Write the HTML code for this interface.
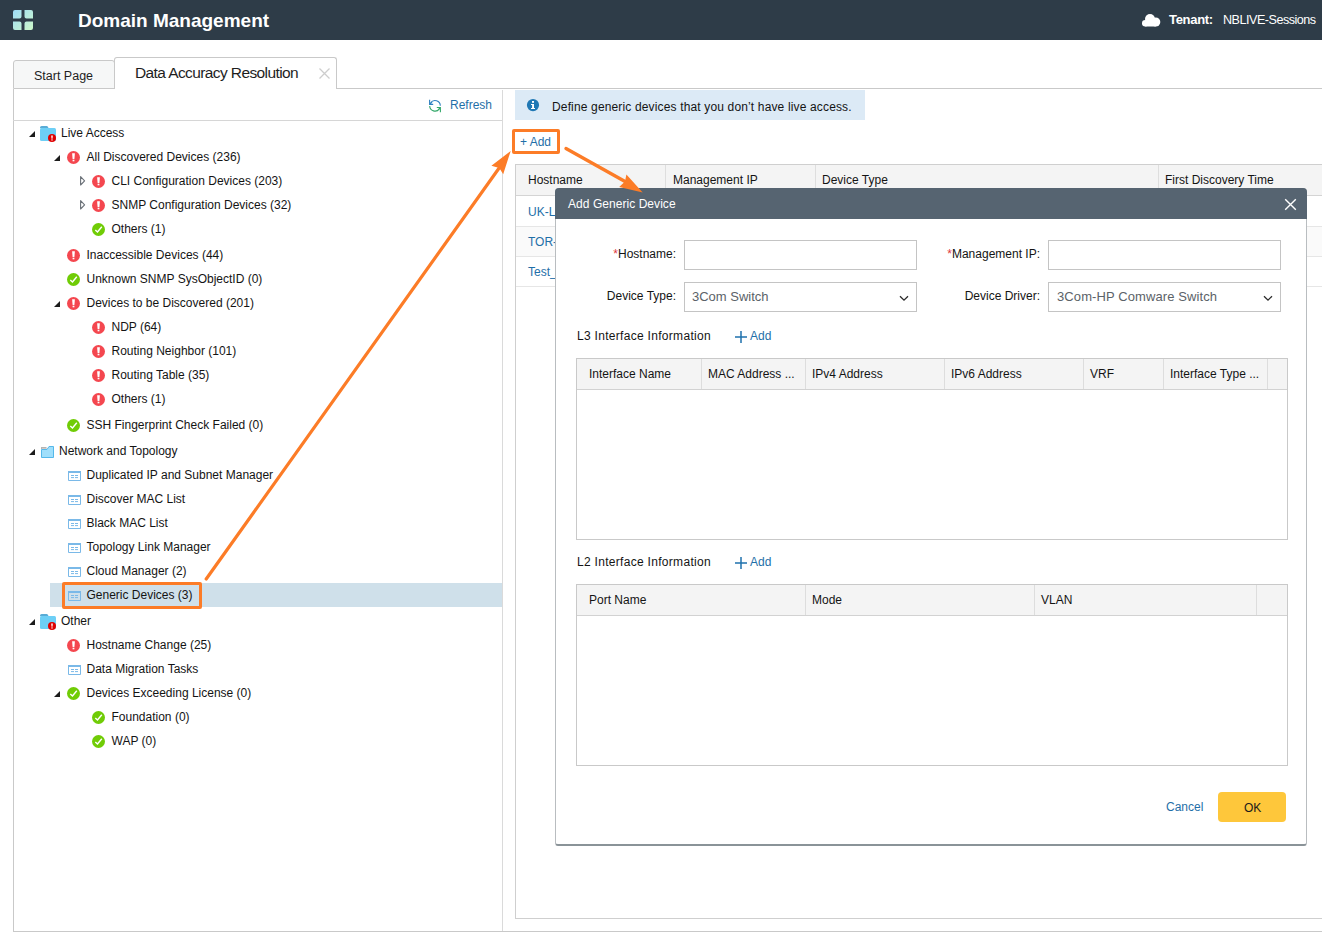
<!DOCTYPE html>
<html><head><meta charset="utf-8"><title>Domain Management</title>
<style>
*{margin:0;padding:0;box-sizing:border-box}
html,body{width:1322px;height:933px;overflow:hidden;background:#fff;font-family:"Liberation Sans",sans-serif;font-size:12px;color:#141414}
.a{position:absolute;white-space:nowrap}
.t{position:absolute;white-space:nowrap;line-height:16px;height:16px}
.lnk{color:#1f6fa8}
.tri{position:absolute;width:0;height:0;border-style:solid;border-width:0 0 6px 6px;border-color:transparent transparent #222 transparent}
.trio{position:absolute}
.ic{position:absolute;width:13px;height:13px}
.hline{position:absolute;height:1px}
.vline{position:absolute;width:1px}
</style></head><body>

<!-- header -->
<div class="a" style="left:0;top:0;width:1322px;height:40px;background:#2e3c48"></div>
<svg class="a" style="left:12px;top:9px" width="23" height="23" viewBox="0 0 23 23">
<defs><linearGradient id="gg" x1="0" y1="0" x2="1" y2="1"><stop offset="0" stop-color="#9fdcf7"/><stop offset="1" stop-color="#cdf8c8"/></linearGradient></defs>
<path fill="url(#gg)" d="M1 3a2 2 0 0 1 2-2h6.5v6.5a2 2 0 0 1-2 2H1z M12.5 1H19a2 2 0 0 1 2 2v6.5h-6.5a2 2 0 0 1-2-2z M1 12.5h6.5a2 2 0 0 1 2 2V21H3a2 2 0 0 1-2-2z M14.5 12.5H21V19a2 2 0 0 1-2 2h-6.5v-6.5a2 2 0 0 1 2-2z"/>
</svg>
<div class="a" style="left:78px;top:9px;font-size:19px;font-weight:bold;color:#fff;line-height:24px">Domain Management</div>
<svg class="a" style="left:1142px;top:14px" width="19" height="13" viewBox="0 0 19 13">
<circle cx="3.2" cy="9.3" r="3.2" fill="#fff"/><circle cx="8" cy="5" r="5" fill="#fff"/><circle cx="13.8" cy="8" r="4.5" fill="#fff"/><rect x="3.2" y="8" width="10.6" height="4.5" fill="#fff"/>
</svg>
<div class="a" style="left:1169px;top:12px;font-size:13px;font-weight:bold;color:#fff;line-height:16px;letter-spacing:-0.3px">Tenant:</div>
<div class="a" style="left:1223px;top:12px;font-size:12.6px;color:#fff;line-height:16px;letter-spacing:-0.5px">NBLIVE-Sessions</div>

<!-- tabs -->
<div class="a" style="left:13px;top:60px;width:102px;height:29px;background:#f6f7f7;border:1px solid #c9c9c9;border-radius:3px 3px 0 0"></div>
<div class="a" style="left:34px;top:68px;font-size:12.5px;line-height:16px;color:#1e1e1e">Start Page</div>
<div class="hline" style="left:336px;top:88px;width:986px;background:#c9c9c9"></div>
<div class="a" style="left:114px;top:57px;width:223px;height:32px;background:#fff;border:1px solid #c9c9c9;border-bottom:none;border-radius:3px 3px 0 0"></div>
<div class="a" style="left:135px;top:63px;font-size:15.5px;line-height:20px;letter-spacing:-0.6px;color:#1e1e1e">Data Accuracy Resolution</div>
<svg class="a" style="left:318px;top:67px" width="13" height="13" viewBox="0 0 13 13"><path d="M1.5 1.5l10 10M11.5 1.5l-10 10" stroke="#cdcdcd" stroke-width="1.3"/></svg>

<!-- left panel borders -->
<div class="vline" style="left:13px;top:89px;height:843px;background:#c9c9c9"></div>
<div class="vline" style="left:502px;top:90px;height:842px;background:#dadada"></div>
<div class="hline" style="left:13px;top:931px;width:1309px;background:#c9c9c9"></div>
<div class="hline" style="left:13px;top:120px;width:489px;background:#d6d6d6"></div>

<!-- refresh -->
<svg class="a" style="left:428px;top:99px" width="14" height="14" viewBox="0 0 14 14">
<path d="M2.66 3.76A5.3 5.3 0 0 1 12.3 6.8" fill="none" stroke="#2f80c0" stroke-width="1.1"/>
<path d="M1.6 0.8v4.6h3.6M1.8 5.2l2.2-2.2" fill="none" stroke="#2f80c0" stroke-width="1.1"/>
<path d="M1.7 7A5.3 5.3 0 0 0 11.34 9.84" fill="none" stroke="#34a86a" stroke-width="1.1"/>
<path d="M12.4 13.2V8.5H8.8M12.2 8.7l-1.6 1.8" fill="none" stroke="#34a86a" stroke-width="1.1"/>
</svg>
<div class="t lnk" style="left:450px;top:97px">Refresh</div>

<!-- TREE -->
<div class="a" style="left:50px;top:583px;width:452px;height:24px;background:#cfe0ea"></div>
<svg class="a" style="left:29px;top:131px" width="6" height="6" viewBox="0 0 6 6"><path d="M0 6L6 0V6z" fill="#1c1c1c"/></svg>
<svg class="a" style="left:40px;top:126px" width="18" height="16" viewBox="0 0 18 16"><path d="M0 1.6A1.6 1.6 0 0 1 1.6 0h5a1.5 1.5 0 0 1 1.3 0.8L8.6 2.2H0z" fill="#59acd6"/><rect x="0" y="1.9" width="16" height="13" rx="1.5" fill="#6dcff6"/><circle cx="12" cy="12" r="4" fill="#e00000"/><path d="M11.2 9.4h1.6l-0.3 3.4h-1z" fill="#fff"/><rect x="11.3" y="13.4" width="1.4" height="1.1" fill="#fff"/></svg>
<div class="t" style="left:61px;top:125px">Live Access</div>
<svg class="a" style="left:54px;top:155px" width="6" height="6" viewBox="0 0 6 6"><path d="M0 6L6 0V6z" fill="#1c1c1c"/></svg>
<svg class="a" style="left:67px;top:151px" width="13" height="13" viewBox="0 0 13 13"><circle cx="6.5" cy="6.5" r="6.5" fill="#f4474f"/><path d="M5.1 2.2h2.8l-0.5 5.7h-1.8z" fill="#fff"/><rect x="5.6" y="8.7" width="1.8" height="1.6" fill="#fff"/></svg>
<div class="t" style="left:86.5px;top:149px">All Discovered Devices (236)</div>
<svg class="a" style="left:80px;top:176px" width="6" height="10" viewBox="0 0 6 10"><path d="M0.6 0.6v8.4l4-4.2z" fill="none" stroke="#6b7178" stroke-width="1.1" stroke-linejoin="round"/></svg>
<svg class="a" style="left:92px;top:175px" width="13" height="13" viewBox="0 0 13 13"><circle cx="6.5" cy="6.5" r="6.5" fill="#f4474f"/><path d="M5.1 2.2h2.8l-0.5 5.7h-1.8z" fill="#fff"/><rect x="5.6" y="8.7" width="1.8" height="1.6" fill="#fff"/></svg>
<div class="t" style="left:111.5px;top:173px">CLI Configuration Devices (203)</div>
<svg class="a" style="left:80px;top:200px" width="6" height="10" viewBox="0 0 6 10"><path d="M0.6 0.6v8.4l4-4.2z" fill="none" stroke="#6b7178" stroke-width="1.1" stroke-linejoin="round"/></svg>
<svg class="a" style="left:92px;top:199px" width="13" height="13" viewBox="0 0 13 13"><circle cx="6.5" cy="6.5" r="6.5" fill="#f4474f"/><path d="M5.1 2.2h2.8l-0.5 5.7h-1.8z" fill="#fff"/><rect x="5.6" y="8.7" width="1.8" height="1.6" fill="#fff"/></svg>
<div class="t" style="left:111.5px;top:197px">SNMP Configuration Devices (32)</div>
<svg class="a" style="left:92px;top:223px" width="13" height="13" viewBox="0 0 13 13"><circle cx="6.5" cy="6.5" r="6.5" fill="#70cc06"/><path d="M3.3 6.9l2.2 2.1 4.3-5.2" fill="none" stroke="#fff" stroke-width="1.4"/></svg>
<div class="t" style="left:111.5px;top:221px">Others (1)</div>
<svg class="a" style="left:67px;top:249px" width="13" height="13" viewBox="0 0 13 13"><circle cx="6.5" cy="6.5" r="6.5" fill="#f4474f"/><path d="M5.1 2.2h2.8l-0.5 5.7h-1.8z" fill="#fff"/><rect x="5.6" y="8.7" width="1.8" height="1.6" fill="#fff"/></svg>
<div class="t" style="left:86.5px;top:247px">Inaccessible Devices (44)</div>
<svg class="a" style="left:67px;top:273px" width="13" height="13" viewBox="0 0 13 13"><circle cx="6.5" cy="6.5" r="6.5" fill="#70cc06"/><path d="M3.3 6.9l2.2 2.1 4.3-5.2" fill="none" stroke="#fff" stroke-width="1.4"/></svg>
<div class="t" style="left:86.5px;top:271px">Unknown SNMP SysObjectID (0)</div>
<svg class="a" style="left:54px;top:301px" width="6" height="6" viewBox="0 0 6 6"><path d="M0 6L6 0V6z" fill="#1c1c1c"/></svg>
<svg class="a" style="left:67px;top:297px" width="13" height="13" viewBox="0 0 13 13"><circle cx="6.5" cy="6.5" r="6.5" fill="#f4474f"/><path d="M5.1 2.2h2.8l-0.5 5.7h-1.8z" fill="#fff"/><rect x="5.6" y="8.7" width="1.8" height="1.6" fill="#fff"/></svg>
<div class="t" style="left:86.5px;top:295px">Devices to be Discovered (201)</div>
<svg class="a" style="left:92px;top:321px" width="13" height="13" viewBox="0 0 13 13"><circle cx="6.5" cy="6.5" r="6.5" fill="#f4474f"/><path d="M5.1 2.2h2.8l-0.5 5.7h-1.8z" fill="#fff"/><rect x="5.6" y="8.7" width="1.8" height="1.6" fill="#fff"/></svg>
<div class="t" style="left:111.5px;top:319px">NDP (64)</div>
<svg class="a" style="left:92px;top:345px" width="13" height="13" viewBox="0 0 13 13"><circle cx="6.5" cy="6.5" r="6.5" fill="#f4474f"/><path d="M5.1 2.2h2.8l-0.5 5.7h-1.8z" fill="#fff"/><rect x="5.6" y="8.7" width="1.8" height="1.6" fill="#fff"/></svg>
<div class="t" style="left:111.5px;top:343px">Routing Neighbor (101)</div>
<svg class="a" style="left:92px;top:369px" width="13" height="13" viewBox="0 0 13 13"><circle cx="6.5" cy="6.5" r="6.5" fill="#f4474f"/><path d="M5.1 2.2h2.8l-0.5 5.7h-1.8z" fill="#fff"/><rect x="5.6" y="8.7" width="1.8" height="1.6" fill="#fff"/></svg>
<div class="t" style="left:111.5px;top:367px">Routing Table (35)</div>
<svg class="a" style="left:92px;top:393px" width="13" height="13" viewBox="0 0 13 13"><circle cx="6.5" cy="6.5" r="6.5" fill="#f4474f"/><path d="M5.1 2.2h2.8l-0.5 5.7h-1.8z" fill="#fff"/><rect x="5.6" y="8.7" width="1.8" height="1.6" fill="#fff"/></svg>
<div class="t" style="left:111.5px;top:391px">Others (1)</div>
<svg class="a" style="left:67px;top:419px" width="13" height="13" viewBox="0 0 13 13"><circle cx="6.5" cy="6.5" r="6.5" fill="#70cc06"/><path d="M3.3 6.9l2.2 2.1 4.3-5.2" fill="none" stroke="#fff" stroke-width="1.4"/></svg>
<div class="t" style="left:86.5px;top:417px">SSH Fingerprint Check Failed (0)</div>
<svg class="a" style="left:29px;top:449px" width="6" height="6" viewBox="0 0 6 6"><path d="M0 6L6 0V6z" fill="#1c1c1c"/></svg>
<svg class="a" style="left:41px;top:446px" width="13" height="12" viewBox="0 0 13 12"><path d="M0.5 3.5h5.5l2-3h4.5v11h-12z" fill="#a0dffb" stroke="#55b8ea" stroke-width="1"/><rect x="0" y="1" width="5.5" height="2" fill="#b4b4b4"/><rect x="1" y="2" width="4" height="1" fill="#d8c8c0"/></svg>
<div class="t" style="left:59px;top:443px">Network and Topology</div>
<svg class="a" style="left:68px;top:471px" width="13" height="10" viewBox="0 0 13 10"><path d="M0.5 1.5h12v8h-12z" fill="none" stroke="#7ab9e8" stroke-width="1"/><rect x="0" y="0" width="13" height="2" fill="#7ab9e8"/><path d="M3 4.5h3M7 4.5h3M3 6.6h3M7 6.6h3" stroke="#7ab9e8" stroke-width="1"/></svg>
<div class="t" style="left:86.5px;top:467px">Duplicated IP and Subnet Manager</div>
<svg class="a" style="left:68px;top:495px" width="13" height="10" viewBox="0 0 13 10"><path d="M0.5 1.5h12v8h-12z" fill="none" stroke="#7ab9e8" stroke-width="1"/><rect x="0" y="0" width="13" height="2" fill="#7ab9e8"/><path d="M3 4.5h3M7 4.5h3M3 6.6h3M7 6.6h3" stroke="#7ab9e8" stroke-width="1"/></svg>
<div class="t" style="left:86.5px;top:491px">Discover MAC List</div>
<svg class="a" style="left:68px;top:519px" width="13" height="10" viewBox="0 0 13 10"><path d="M0.5 1.5h12v8h-12z" fill="none" stroke="#7ab9e8" stroke-width="1"/><rect x="0" y="0" width="13" height="2" fill="#7ab9e8"/><path d="M3 4.5h3M7 4.5h3M3 6.6h3M7 6.6h3" stroke="#7ab9e8" stroke-width="1"/></svg>
<div class="t" style="left:86.5px;top:515px">Black MAC List</div>
<svg class="a" style="left:68px;top:543px" width="13" height="10" viewBox="0 0 13 10"><path d="M0.5 1.5h12v8h-12z" fill="none" stroke="#7ab9e8" stroke-width="1"/><rect x="0" y="0" width="13" height="2" fill="#7ab9e8"/><path d="M3 4.5h3M7 4.5h3M3 6.6h3M7 6.6h3" stroke="#7ab9e8" stroke-width="1"/></svg>
<div class="t" style="left:86.5px;top:539px">Topology Link Manager</div>
<svg class="a" style="left:68px;top:567px" width="13" height="10" viewBox="0 0 13 10"><path d="M0.5 1.5h12v8h-12z" fill="none" stroke="#7ab9e8" stroke-width="1"/><rect x="0" y="0" width="13" height="2" fill="#7ab9e8"/><path d="M3 4.5h3M7 4.5h3M3 6.6h3M7 6.6h3" stroke="#7ab9e8" stroke-width="1"/></svg>
<div class="t" style="left:86.5px;top:563px">Cloud Manager (2)</div>
<svg class="a" style="left:68px;top:591px" width="13" height="10" viewBox="0 0 13 10"><path d="M0.5 1.5h12v8h-12z" fill="none" stroke="#7ab9e8" stroke-width="1"/><rect x="0" y="0" width="13" height="2" fill="#7ab9e8"/><path d="M3 4.5h3M7 4.5h3M3 6.6h3M7 6.6h3" stroke="#7ab9e8" stroke-width="1"/></svg>
<div class="t" style="left:86.5px;top:587px">Generic Devices (3)</div>
<svg class="a" style="left:29px;top:619px" width="6" height="6" viewBox="0 0 6 6"><path d="M0 6L6 0V6z" fill="#1c1c1c"/></svg>
<svg class="a" style="left:40px;top:614px" width="18" height="16" viewBox="0 0 18 16"><path d="M0 1.6A1.6 1.6 0 0 1 1.6 0h5a1.5 1.5 0 0 1 1.3 0.8L8.6 2.2H0z" fill="#59acd6"/><rect x="0" y="1.9" width="16" height="13" rx="1.5" fill="#6dcff6"/><circle cx="12" cy="12" r="4" fill="#e00000"/><path d="M11.2 9.4h1.6l-0.3 3.4h-1z" fill="#fff"/><rect x="11.3" y="13.4" width="1.4" height="1.1" fill="#fff"/></svg>
<div class="t" style="left:61px;top:613px">Other</div>
<svg class="a" style="left:67px;top:639px" width="13" height="13" viewBox="0 0 13 13"><circle cx="6.5" cy="6.5" r="6.5" fill="#f4474f"/><path d="M5.1 2.2h2.8l-0.5 5.7h-1.8z" fill="#fff"/><rect x="5.6" y="8.7" width="1.8" height="1.6" fill="#fff"/></svg>
<div class="t" style="left:86.5px;top:637px">Hostname Change (25)</div>
<svg class="a" style="left:68px;top:665px" width="13" height="10" viewBox="0 0 13 10"><path d="M0.5 1.5h12v8h-12z" fill="none" stroke="#7ab9e8" stroke-width="1"/><rect x="0" y="0" width="13" height="2" fill="#7ab9e8"/><path d="M3 4.5h3M7 4.5h3M3 6.6h3M7 6.6h3" stroke="#7ab9e8" stroke-width="1"/></svg>
<div class="t" style="left:86.5px;top:661px">Data Migration Tasks</div>
<svg class="a" style="left:54px;top:691px" width="6" height="6" viewBox="0 0 6 6"><path d="M0 6L6 0V6z" fill="#1c1c1c"/></svg>
<svg class="a" style="left:67px;top:687px" width="13" height="13" viewBox="0 0 13 13"><circle cx="6.5" cy="6.5" r="6.5" fill="#70cc06"/><path d="M3.3 6.9l2.2 2.1 4.3-5.2" fill="none" stroke="#fff" stroke-width="1.4"/></svg>
<div class="t" style="left:86.5px;top:685px">Devices Exceeding License (0)</div>
<svg class="a" style="left:92px;top:711px" width="13" height="13" viewBox="0 0 13 13"><circle cx="6.5" cy="6.5" r="6.5" fill="#70cc06"/><path d="M3.3 6.9l2.2 2.1 4.3-5.2" fill="none" stroke="#fff" stroke-width="1.4"/></svg>
<div class="t" style="left:111.5px;top:709px">Foundation (0)</div>
<svg class="a" style="left:92px;top:735px" width="13" height="13" viewBox="0 0 13 13"><circle cx="6.5" cy="6.5" r="6.5" fill="#70cc06"/><path d="M3.3 6.9l2.2 2.1 4.3-5.2" fill="none" stroke="#fff" stroke-width="1.4"/></svg>
<div class="t" style="left:111.5px;top:733px">WAP (0)</div>


<!-- RIGHT -->
<div class="a" style="left:515px;top:90px;width:350px;height:30px;background:#dceaf6"></div>
<svg class="a" style="left:526px;top:98px" width="14" height="14" viewBox="0 0 14 14"><circle cx="7" cy="7.1" r="6.1" fill="#1f78b4"/><rect x="6" y="3" width="2" height="1.8" fill="#fff"/><path d="M5 6.1h3v3.9h1v1H5v-1h1.1v-2.9H5z" fill="#fff"/></svg>
<div class="t" style="left:552px;top:99px;letter-spacing:0.15px">Define generic devices that you don’t have live access.</div>
<div class="t lnk" style="left:520px;top:134px">+ Add</div>
<div class="a" style="left:515px;top:164px;width:820px;height:755px;border:1px solid #cfcfcf;background:#fff"></div>
<div class="a" style="left:516px;top:165px;width:806px;height:31px;background:#f4f4f4;border-bottom:1px solid #d4d4d4"></div>
<div class="vline" style="left:665px;top:165px;height:30px;background:#dedede"></div>
<div class="vline" style="left:815px;top:165px;height:30px;background:#dedede"></div>
<div class="vline" style="left:1158px;top:165px;height:30px;background:#dedede"></div>
<div class="t" style="left:528px;top:172px">Hostname</div>
<div class="t" style="left:673px;top:172px">Management IP</div>
<div class="t" style="left:822px;top:172px">Device Type</div>
<div class="t" style="left:1165px;top:172px">First Discovery Time</div>
<div class="a" style="left:516px;top:227px;width:806px;height:29px;background:#fafafa"></div>
<div class="hline" style="left:516px;top:226px;width:806px;background:#e6e6e6"></div>
<div class="hline" style="left:516px;top:256px;width:806px;background:#e6e6e6"></div>
<div class="hline" style="left:516px;top:286px;width:806px;background:#e6e6e6"></div>
<div class="t lnk" style="left:528px;top:204px">UK-LON</div>
<div class="t lnk" style="left:528px;top:234px">TOR-SW</div>
<div class="t lnk" style="left:528px;top:264px">Test_01</div>


<!-- MODAL -->
<div class="a" style="left:555px;top:188px;width:752px;height:658px;background:#fff;border:1px solid #b9bdc0;border-bottom:2px solid #8a9398;border-radius:4px 4px 3px 3px"></div>
<div class="a" style="left:555px;top:188px;width:752px;height:31px;background:#566471;border-radius:4px 4px 0 0"></div>
<div class="t" style="left:568px;top:196px;color:#fff;font-size:12px;letter-spacing:0.05px">Add Generic Device</div>
<svg class="a" style="left:1284px;top:198px" width="13" height="13" viewBox="0 0 13 13"><path d="M1.2 1.2l10.6 10.6M11.8 1.2L1.2 11.8" stroke="#fff" stroke-width="1.4"/></svg>
<div class="t" style="right:646px;top:246px;text-align:right"><span style="color:#e0383e">*</span>Hostname:</div>
<div class="a" style="left:684px;top:240px;width:233px;height:30px;border:1px solid #c4c4c4;background:#fff"></div>
<div class="t" style="right:646px;top:288px;text-align:right">Device Type:</div>
<div class="a" style="left:684px;top:282px;width:233px;height:30px;border:1px solid #c4c4c4;background:#fff"></div>
<div class="t" style="left:692px;top:289px;font-size:13px;color:#5b6268">3Com Switch</div>
<svg class="a" style="left:899px;top:295px" width="10" height="7" viewBox="0 0 10 7"><path d="M1 1.2l4 4 4-4" fill="none" stroke="#2b2b2b" stroke-width="1.3"/></svg>
<div class="t" style="right:282px;top:246px;text-align:right"><span style="color:#e0383e">*</span>Management IP:</div>
<div class="a" style="left:1048px;top:240px;width:233px;height:30px;border:1px solid #c4c4c4;background:#fff"></div>
<div class="t" style="right:282px;top:288px;text-align:right">Device Driver:</div>
<div class="a" style="left:1048px;top:282px;width:233px;height:30px;border:1px solid #c4c4c4;background:#fff"></div>
<div class="t" style="left:1057px;top:289px;font-size:13px;color:#5b6268;letter-spacing:0.1px">3Com-HP Comware Switch</div>
<svg class="a" style="left:1263px;top:295px" width="10" height="7" viewBox="0 0 10 7"><path d="M1 1.2l4 4 4-4" fill="none" stroke="#2b2b2b" stroke-width="1.3"/></svg>
<div class="t" style="left:577px;top:328px;letter-spacing:0.3px">L3 Interface Information</div>
<svg class="a" style="left:735px;top:331px" width="12" height="12" viewBox="0 0 12 12"><path d="M6 0v12M0 6h12" stroke="#1f72ad" stroke-width="1.5"/></svg>
<div class="t lnk" style="left:750px;top:328px">Add</div>
<div class="a" style="left:576px;top:358px;width:712px;height:182px;border:1px solid #c9c9c9;background:#fff"></div>
<div class="a" style="left:577px;top:359px;width:710px;height:31px;background:#f4f4f4;border-bottom:1px solid #d2d2d2"></div>
<div class="t" style="left:589px;top:366px">Interface Name</div>
<div class="vline" style="left:701px;top:359px;height:30px;background:#dddddd"></div>
<div class="t" style="left:708px;top:366px">MAC Address ...</div>
<div class="vline" style="left:805px;top:359px;height:30px;background:#dddddd"></div>
<div class="t" style="left:812px;top:366px">IPv4 Address</div>
<div class="vline" style="left:944px;top:359px;height:30px;background:#dddddd"></div>
<div class="t" style="left:951px;top:366px">IPv6 Address</div>
<div class="vline" style="left:1083px;top:359px;height:30px;background:#dddddd"></div>
<div class="t" style="left:1090px;top:366px">VRF</div>
<div class="vline" style="left:1163px;top:359px;height:30px;background:#dddddd"></div>
<div class="t" style="left:1170px;top:366px">Interface Type ...</div>
<div class="vline" style="left:1267px;top:359px;height:30px;background:#dddddd"></div>
<div class="t" style="left:577px;top:554px;letter-spacing:0.3px">L2 Interface Information</div>
<svg class="a" style="left:735px;top:557px" width="12" height="12" viewBox="0 0 12 12"><path d="M6 0v12M0 6h12" stroke="#1f72ad" stroke-width="1.5"/></svg>
<div class="t lnk" style="left:750px;top:554px">Add</div>
<div class="a" style="left:576px;top:584px;width:712px;height:182px;border:1px solid #c9c9c9;background:#fff"></div>
<div class="a" style="left:577px;top:585px;width:710px;height:31px;background:#f4f4f4;border-bottom:1px solid #d2d2d2"></div>
<div class="t" style="left:589px;top:592px">Port Name</div>
<div class="vline" style="left:805px;top:585px;height:30px;background:#dddddd"></div>
<div class="t" style="left:812px;top:592px">Mode</div>
<div class="vline" style="left:1034px;top:585px;height:30px;background:#dddddd"></div>
<div class="t" style="left:1041px;top:592px">VLAN</div>
<div class="vline" style="left:1256px;top:585px;height:30px;background:#dddddd"></div>
<div class="t lnk" style="left:1166px;top:799px">Cancel</div>
<div class="a" style="left:1218px;top:792px;width:68px;height:30px;background:#fec73b;border-radius:4px"></div>
<div class="t" style="left:1244px;top:800px;color:#1a1a1a">OK</div>


<!-- ARROWS -->
<svg class="a" style="left:0;top:0" width="1322" height="933" viewBox="0 0 1322 933">
<rect x="63.5" y="583.5" width="137" height="24" rx="0.5" fill="none" stroke="#fc7c27" stroke-width="3"/>
<rect x="513.5" y="130.5" width="45" height="22" rx="0.5" fill="none" stroke="#fc7c27" stroke-width="3"/>
<path d="M206.2 579L499.5 167.5" stroke="#fc7c27" stroke-width="3.2" stroke-linecap="round"/>
<path d="M510.7 150.9L491.4 165.8L499.3 167.9L503.2 174.3z" fill="#fc7c27"/>
<path d="M566 148.5L625.5 181.8" stroke="#fc7c27" stroke-width="3.4" stroke-linecap="round"/>
<path d="M642.7 192.4L626.4 174.4L625 181.5L619.2 187z" fill="#fc7c27"/>
</svg>


</body></html>
